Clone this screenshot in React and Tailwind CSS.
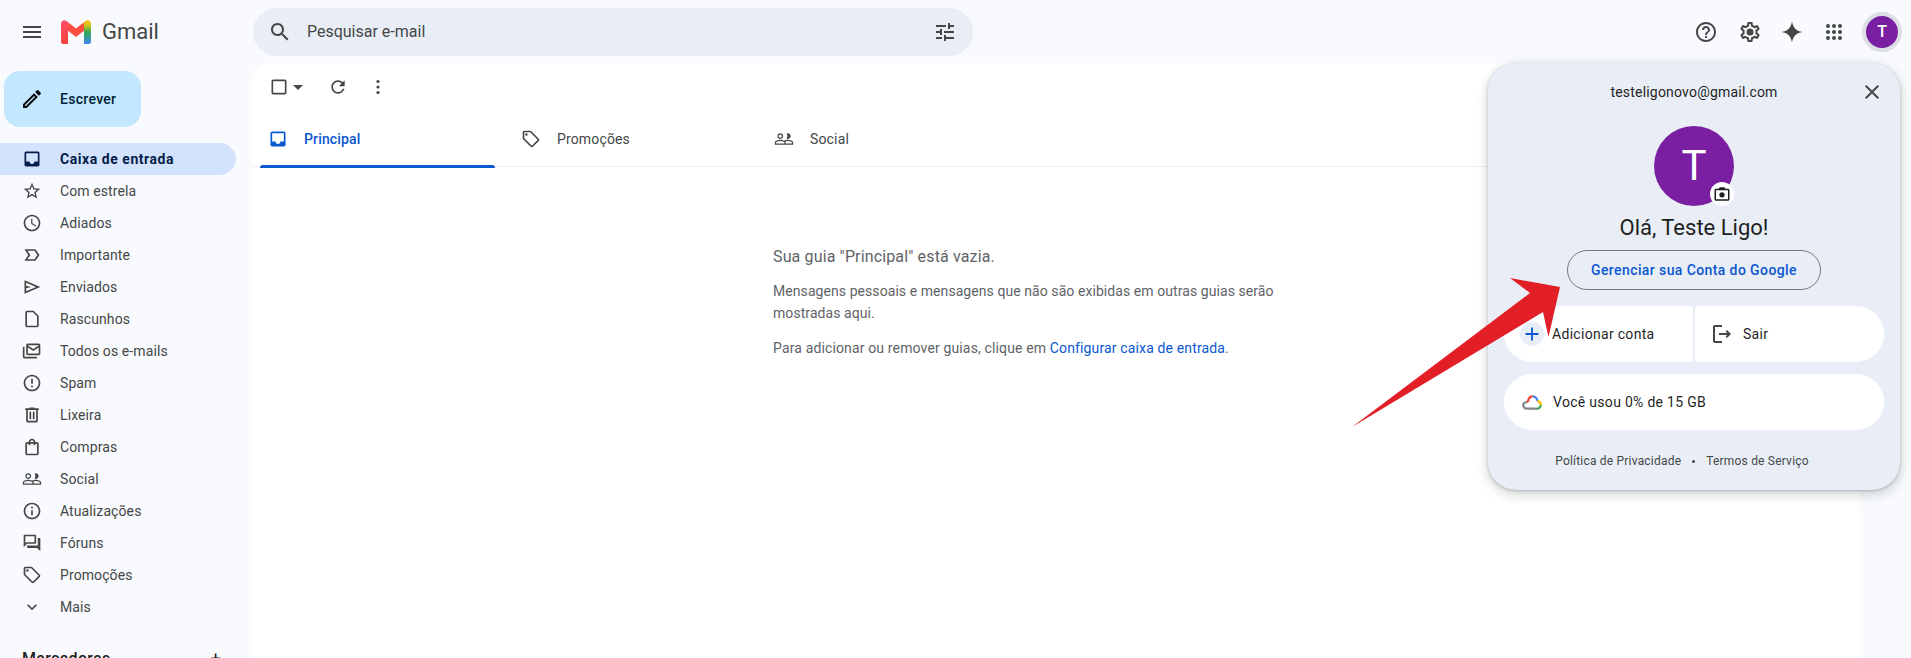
import React from 'react';

const ink = '#444746';

function Icon({ d, size = 20, color = ink, className = '', children }) {
  return (
    <svg viewBox="0 0 24 24" width={size} height={size} fill={color} className={`shrink-0 ${className}`}>
      {d && <path d={d} />}
      {children}
    </svg>
  );
}

const paths = {
  menu: 'M3 18h18v-2H3v2zm0-5h18v-2H3v2zm0-7v2h18V6H3z',
  search: 'M15.5 14h-.79l-.28-.27C15.41 12.59 16 11.11 16 9.5 16 5.91 13.09 3 9.5 3S3 5.91 3 9.5 5.91 16 9.5 16c1.61 0 3.09-.59 4.23-1.57l.27.28v.79l5 4.99L20.49 19l-4.99-5zm-6 0C7.01 14 5 11.99 5 9.5S7.01 5 9.5 5 14 7.01 14 9.5 11.99 14 9.5 14z',
  tune: 'M3 17v2h6v-2H3zM3 5v2h10V5H3zm10 16v-2h8v-2h-8v-2h-2v6h2zM7 9v2H3v2h4v2h2V9H7zm14 4v-2H11v2h10zm-6-4h2V7h4V5h-4V3h-2v6z',
  help: 'M11 18h2v-2h-2v2zm1-16C6.48 2 2 6.48 2 12s4.48 10 10 10 10-4.48 10-10S17.52 2 12 2zm0 18c-4.41 0-8-3.59-8-8s3.59-8 8-8 8 3.59 8 8-3.59 8-8 8zm0-14c-2.21 0-4 1.79-4 4h2c0-1.1.9-2 2-2s2 .9 2 2c0 2-3 1.75-3 5h2c0-2.25 3-2.5 3-5 0-2.21-1.79-4-4-4z',
  gear: 'M19.43 12.98c.04-.32.07-.64.07-.98 0-.34-.03-.66-.07-.98l2.11-1.65c.19-.15.24-.42.12-.64l-2-3.46c-.09-.16-.26-.25-.44-.25-.06 0-.12.01-.17.03l-2.49 1c-.52-.4-1.08-.73-1.69-.98l-.38-2.65C14.46 2.18 14.25 2 14 2h-4c-.25 0-.46.18-.49.42l-.38 2.65c-.61.25-1.17.59-1.69.98l-2.49-1c-.06-.02-.12-.03-.18-.03-.17 0-.34.09-.43.25l-2 3.46c-.13.22-.07.49.12.64l2.11 1.65c-.04.32-.07.65-.07.98 0 .33.03.66.07.98l-2.11 1.65c-.19.15-.24.42-.12.64l2 3.46c.09.16.26.25.44.25.06 0 .12-.01.17-.03l2.49-1c.52.4 1.08.73 1.69.98l.38 2.65c.03.24.24.42.49.42h4c.25 0 .46-.18.49-.42l.38-2.65c.61-.25 1.17-.59 1.69-.98l2.49 1c.06.02.12.03.18.03.17 0 .34-.09.43-.25l2-3.46c.12-.22.07-.49-.12-.64l-2.11-1.65zm-1.98-1.71c.04.31.05.52.05.73 0 .21-.02.43-.05.73l-.14 1.13.89.7 1.08.84-.7 1.21-1.27-.51-1.04-.42-.9.68c-.43.32-.84.56-1.25.73l-1.06.43-.16 1.13-.2 1.35h-1.4l-.19-1.35-.16-1.13-1.06-.43c-.43-.18-.83-.41-1.23-.71l-.91-.7-1.06.43-1.27.51-.7-1.21 1.08-.84.89-.7-.14-1.13c-.03-.31-.05-.54-.05-.74s.02-.43.05-.73l.14-1.13-.89-.7-1.08-.84.7-1.21 1.27.51 1.04.42.9-.68c.43-.32.84-.56 1.25-.73l1.06-.43.16-1.13.2-1.35h1.39l.19 1.35.16 1.13 1.06.43c.43.18.83.41 1.23.71l.91.7 1.06-.43 1.27-.51.7 1.21-1.07.85-.89.7.14 1.13zM12 8.5a3.5 3.5 0 1 0 0 7 3.5 3.5 0 1 0 0-7z',
  spark: 'M12 1.5C12.7 7.4 16.6 11.3 22.5 12 16.6 12.7 12.7 16.6 12 22.5 11.3 16.6 7.4 12.7 1.5 12 7.4 11.3 11.3 7.4 12 1.5z',
  inbox: 'M19 3H5c-1.1 0-2 .9-2 2v14c0 1.1.9 2 2 2h14c1.1 0 2-.9 2-2V5c0-1.1-.9-2-2-2zm0 12h-4c0 1.66-1.34 3-3 3s-3-1.34-3-3H5V5h14v10z',
  star: 'M22 9.24l-7.19-.62L12 2 9.19 8.63 2 9.24l5.46 4.73L5.82 21 12 17.27 18.18 21l-1.63-7.03L22 9.24zM12 15.4l-3.76 2.27 1-4.28-3.32-2.88 4.38-.38L12 6.1l1.71 4.04 4.38.38-3.32 2.88 1 4.28L12 15.4z',
  clock: 'M11.99 2C6.47 2 2 6.48 2 12s4.47 10 9.99 10C17.52 22 22 17.52 22 12S17.52 2 11.99 2zM12 20c-4.42 0-8-3.58-8-8s3.58-8 8-8 8 3.58 8 8-3.58 8-8 8zm.5-13H11v6l5.25 3.15.75-1.23-4.5-2.67z',
  important: 'M15 19H3l4.5-7L3 5h12c.65 0 1.26.31 1.63.84L21 12l-4.37 6.16c-.37.52-.98.84-1.63.84zm-8.5-2H15l3.5-5L15 7H6.5l3.5 5-3.5 5z',
  send: 'M3 20V4l19 8-19 8zm2-3l11.85-5L5 7v3.5l6 1.5-6 1.5V17z',
  draft: 'M14 2H6c-1.1 0-2 .9-2 2v16c0 1.1.9 2 2 2h12c1.1 0 2-.9 2-2V8l-6-6zM6 20V4h7.17L18 8.83V20H6z',
  allMail: 'M20 3H7c-1.1 0-2 .9-2 2v10c0 1.1.9 2 2 2h13c1.1 0 2-.9 2-2V5c0-1.1-.9-2-2-2zm0 2v.5l-6.5 4.2L7 5.5V5h13zM7 15V7.8l6.5 4.2L20 7.8V15H7zM3 7H1v12c0 1.1.9 2 2 2h15v-2H3V7z',
  spam: 'M11 15h2v2h-2zm0-8h2v6h-2zm.99-5C6.47 2 2 6.48 2 12s4.47 10 9.99 10C17.52 22 22 17.52 22 12S17.52 2 11.99 2zM12 20c-4.42 0-8-3.58-8-8s3.58-8 8-8 8 3.58 8 8-3.58 8-8 8z',
  trash: 'M15 4V3H9v1H4v2h1v13c0 1.1.9 2 2 2h10c1.1 0 2-.9 2-2V6h1V4h-5zm2 15H7V6h10v13zM9 8h2v9H9zm4 0h2v9h-2z',
  bag: 'M18 6h-2c0-2.21-1.79-4-4-4S8 3.79 8 6H6c-1.1 0-2 .9-2 2v12c0 1.1.9 2 2 2h12c1.1 0 2-.9 2-2V8c0-1.1-.9-2-2-2zm-6-2c1.1 0 2 .9 2 2h-4c0-1.1.9-2 2-2zm6 16H6V8h2v2h2V8h4v2h2V8h2v12z',
  people: 'M16.5 13c-1.2 0-3.07.34-4.5 1-1.43-.67-3.3-1-4.5-1C5.33 13 1 14.08 1 16.25V19h22v-2.75c0-2.17-4.33-3.25-6.5-3.25zm-4 4.5h-10v-1.25c0-.54 2.56-1.75 5-1.75s5 1.21 5 1.75v1.25zm9 0H14v-1.25c0-.46-.2-.86-.52-1.22.88-.3 1.96-.53 3.02-.53 2.44 0 5 1.21 5 1.75v1.25zM7.5 12c1.93 0 3.5-1.57 3.5-3.5S9.43 5 7.5 5 4 6.57 4 8.5 5.57 12 7.5 12zm0-5.5c1.1 0 2 .9 2 2s-.9 2-2 2-2-.9-2-2 .9-2 2-2zm9 5.5c1.93 0 3.5-1.57 3.5-3.5S18.43 5 16.5 5c-.5 0-1 .1-1.4.3.6.9.9 2 .9 3.2s-.3 2.3-.9 3.2c.4.2.9.3 1.4.3z',
  info: 'M11 7h2v2h-2zm0 4h2v6h-2zm1-9C6.48 2 2 6.48 2 12s4.48 10 10 10 10-4.48 10-10S17.52 2 12 2zm0 18c-4.41 0-8-3.59-8-8s3.59-8 8-8 8 3.59 8 8-3.59 8-8 8z',
  forum: 'M15 4v7H5.17L4 12.17V4h11m1-2H3c-.55 0-1 .45-1 1v14l4-4h10c.55 0 1-.45 1-1V3c0-.55-.45-1-1-1zm5 4h-2v9H6v2c0 .55.45 1 1 1h11l4 4V7c0-.55-.45-1-1-1z',
  tag: 'M21.41 11.58l-9-9C12.05 2.22 11.55 2 11 2H4c-1.1 0-2 .9-2 2v7c0 .55.22 1.05.59 1.42l9 9c.36.36.86.58 1.41.58s1.05-.22 1.41-.59l7-7c.37-.36.59-.86.59-1.41s-.23-1.06-.59-1.42zM13 20.01L4 11V4h7v-.01l9 9-7 7.02zM6.5 5a1.5 1.5 0 1 0 0 3 1.5 1.5 0 1 0 0-3z',
  chevron: 'M16.59 8.59L12 13.17 7.41 8.59 6 10l6 6 6-6z',
  pencil: 'M14.06 9.02l.92.92L5.92 19H5v-.92l9.06-9.06M17.66 3c-.25 0-.51.1-.7.29l-1.83 1.83 3.75 3.75 1.83-1.83c.39-.39.39-1.02 0-1.41l-2.34-2.34c-.2-.2-.45-.29-.71-.29zm-3.6 3.19L3 17.25V21h3.75L17.81 9.94l-3.75-3.75z',
  refresh: 'M17.65 6.35C16.2 4.9 14.21 4 12 4c-4.42 0-7.99 3.58-7.99 8s3.57 8 7.99 8c3.73 0 6.84-2.55 7.73-6h-2.08c-.82 2.33-3.04 4-5.65 4-3.31 0-6-2.69-6-6s2.69-6 6-6c1.66 0 3.14.69 4.22 1.78L13 11h7V4l-2.35 2.35z',
  checkbox: 'M19 5v14H5V5h14m0-2H5c-1.1 0-2 .9-2 2v14c0 1.1.9 2 2 2h14c1.1 0 2-.9 2-2V5c0-1.1-.9-2-2-2z',
  close: 'M19 6.41L17.59 5 12 10.59 6.41 5 5 6.41 10.59 12 5 17.59 6.41 19 12 13.41 17.59 19 19 17.59 13.41 12z',
  logout: 'M17 8l-1.41 1.41L17.17 11H9v2h8.17l-1.58 1.58L17 16l4-4-4-4zM5 5h7V3H5c-1.1 0-2 .9-2 2v14c0 1.1.9 2 2 2h7v-2H5V5z',
  add: 'M19 13h-6v6h-2v-6H5v-2h6V5h2v6h6v2z',
  camera: 'M20 5h-3.17L15 3H9L7.17 5H4c-1.1 0-2 .9-2 2v12c0 1.1.9 2 2 2h16c1.1 0 2-.9 2-2V7c0-1.1-.9-2-2-2zm0 14H4V7h16v12zM12 9.5a3.5 3.5 0 1 0 0 7 3.5 3.5 0 1 0 0-7z',
};

const navItems = [
  { label: 'Caixa de entrada', icon: 'inbox', active: true },
  { label: 'Com estrela', icon: 'star' },
  { label: 'Adiados', icon: 'clock' },
  { label: 'Importante', icon: 'important' },
  { label: 'Enviados', icon: 'send' },
  { label: 'Rascunhos', icon: 'draft' },
  { label: 'Todos os e-mails', icon: 'allMail' },
  { label: 'Spam', icon: 'spam' },
  { label: 'Lixeira', icon: 'trash' },
  { label: 'Compras', icon: 'bag' },
  { label: 'Social', icon: 'people' },
  { label: 'Atualizações', icon: 'info' },
  { label: 'Fóruns', icon: 'forum' },
  { label: 'Promoções', icon: 'tag' },
  { label: 'Mais', icon: 'chevron' },
];

function GmailLogo() {
  return (
    <svg viewBox="0 0 30 24" width="30" height="24" className="shrink-0">
      <defs>
        <linearGradient id="gm-right" x1="0" y1="0" x2="0" y2="1">
          <stop offset="0" stopColor="#fbbc04" />
          <stop offset="0.2" stopColor="#d9c41c" />
          <stop offset="0.5" stopColor="#34a853" />
          <stop offset="1" stopColor="#4285f4" />
        </linearGradient>
        <linearGradient id="gm-left" x1="0" y1="0" x2="0" y2="1">
          <stop offset="0" stopColor="#ff4f6a" />
          <stop offset="1" stopColor="#f4433b" />
        </linearGradient>
      </defs>
      <path fill="url(#gm-left)" d="M0 3.5C0 .8 3-.8 5.2.8L7 2.2V24H2.2C1 24 0 23 0 21.8z" />
      <path fill="url(#gm-right)" d="M30 3.5C30 .8 27-.8 24.8.8L23 2.2V24h4.8c1.2 0 2.2-1 2.2-2.2z" />
      <path fill="#ff4d42" d="M7 2.2l8 6.2 8-6.2v8.6l-8 6.2-8-6.2z" />
    </svg>
  );
}

function CloudIcon() {
  return (
    <svg viewBox="0 0 24 18" width="20" height="15" fill="none" strokeWidth="2.6" className="shrink-0">
      <path stroke="#ea4335" d="M5.6 8.8C6 8.2 6.6 7.6 7.3 7.2 8 4 10 1.7 13 1.7" />
      <path stroke="#4285f4" d="M13 1.7c1.6 0 3 .7 4 1.8 1 1.1 1.5 2.5 1.6 3.9" />
      <path stroke="#fbbc04" d="M18.6 7.4C20.8 7.8 22.5 9.5 22.5 12" />
      <path stroke="#34a853" d="M22.5 12c0 1.4-.6 2.7-1.6 3.5-.8.6-1.8.9-2.9.9" />
      <path stroke="#80868b" d="M18 16.4H6.2C3.3 16.4 1.4 14.4 1.4 12.1c0-2 1.7-3.6 4.2-3.3" />
    </svg>
  );
}

function Sidebar() {
  return (
    <aside className="w-[252px] shrink-0 pt-2">
      <button className="ml-1 flex h-14 w-[137px] items-center rounded-2xl bg-[#c2e7ff] pl-4 text-sm font-medium tracking-[0.3px] text-[#001d35]">
        <Icon d={paths.pencil} size={24} color="#0b0b0b" />
        <span className="ml-4">Escrever</span>
      </button>
      <nav className="mt-4 w-[236px]">
        {navItems.map((item) => (
          <div
            key={item.label}
            className={`flex h-8 items-center rounded-r-full pl-[22px] text-sm ${item.active ? 'bg-[#d3e3fd] font-bold tracking-[0.55px] text-[#041e49]' : 'tracking-[0.1px] text-[#444746]'}`}
          >
            <Icon d={paths[item.icon]} size={20} color={item.active ? '#041e49' : ink} />
            <span className="ml-[18px]">{item.label}</span>
          </div>
        ))}
      </nav>
      <div className="mt-[20px] flex h-8 items-center justify-between pl-[22px] pr-[31px] text-base font-medium tracking-[0.3px] text-[#1f1f1f]">
        <span>Marcadores</span>
        <span className="text-lg font-normal">+</span>
      </div>
    </aside>
  );
}

function Tab({ icon, label, active, className }) {
  return (
    <div
      className={`relative flex h-[56px] items-center text-sm tracking-[0.15px] ${active ? 'font-medium text-[#0b57d0]' : 'text-[#444746]'} ${className}`}
    >
      <Icon d={paths[icon]} size={20} color={active ? '#0b57d0' : ink} />
      <span className="ml-4">{label}</span>
      {active && <div className="absolute bottom-[-1px] left-0 h-[3px] w-[235px] rounded-t-[3px] bg-[#0b57d0]" />}
    </div>
  );
}

function EmptyInbox() {
  return (
    <div className="ml-[521px] w-[540px] pt-[78px] text-sm leading-[22px] text-[#5f6368]">
      <h2 className="text-base font-normal leading-6 tracking-[0.14px]">Sua guia "Principal" está vazia.</h2>
      <p className="mt-[11px] tracking-[0.07px]">Mensagens pessoais e mensagens que não são exibidas em outras guias serão mostradas aqui.</p>
      <p className="mt-[13px] tracking-[0.14px]">
        Para adicionar ou remover guias, clique em <span className="text-[#0b57d0]">Configurar caixa de entrada</span>.
      </p>
    </div>
  );
}

function AccountCard() {
  return (
    <div className="absolute left-[1488px] top-[63px] flex h-[427px] w-[412px] flex-col items-center rounded-[28px] bg-[#e9eef6] shadow-[0_4px_8px_3px_rgba(60,64,67,0.15),0_1px_3px_rgba(60,64,67,0.3)]">
      <div className="relative mt-[19px] flex h-5 w-full items-center justify-center text-sm tracking-[0.2px] text-[#1f1f1f]">
        testeligonovo@gmail.com
        <Icon d={paths.close} size={24} className="absolute right-4" />
      </div>
      <div className="relative mt-[24px] flex h-20 w-20 items-center justify-center rounded-full bg-[#7b1fa2] text-[42px] leading-none text-white">
        T
        <div className="absolute bottom-0 right-0 flex h-6 w-6 items-center justify-center rounded-full bg-white">
          <Icon d={paths.camera} size={18} color="#1f1f1f" />
        </div>
      </div>
      <div className="mt-[8px] text-[22px] leading-7 text-[#1f1f1f]">Olá, Teste Ligo!</div>
      <button className="mt-[8px] flex h-10 w-[254px] items-center justify-center rounded-full border border-[#747775] text-sm font-medium tracking-[0.4px] text-[#0b57d0]">
        Gerenciar sua Conta do Google
      </button>
      <div className="mt-4 flex h-14 w-[380px] gap-0.5 text-sm tracking-[0.3px] text-[#1f1f1f]">
        <div className="flex w-[189px] items-center rounded-l-[28px] rounded-r-[4px] bg-white pl-4">
          <div className="flex h-6 w-6 items-center justify-center rounded-full bg-[#e9eef6]">
            <Icon d={paths.add} size={22} color="#0b57d0" />
          </div>
          <span className="ml-2">Adicionar conta</span>
        </div>
        <div className="flex flex-1 items-center rounded-l-[4px] rounded-r-[28px] bg-white pl-[15px]">
          <Icon d={paths.logout} size={24} />
          <span className="ml-[9px]">Sair</span>
        </div>
      </div>
      <div className="mt-3 flex h-14 w-[380px] items-center rounded-[28px] bg-white pl-[18px] text-sm tracking-[0.3px] text-[#1f1f1f]">
        <CloudIcon />
        <span className="ml-[11px]">Você usou 0% de 15 GB</span>
      </div>
      <div className="mt-[23px] mr-6 flex items-center text-xs tracking-[0.2px] text-[#444746]">
        <span>Política de Privacidade</span>
        <span className="mx-[11px] h-[3px] w-[3px] rounded-full bg-[#444746]" />
        <span>Termos de Serviço</span>
      </div>
    </div>
  );
}

export default function App() {
  return (
    <div className="relative h-screen overflow-hidden bg-[#f8fafd] font-['Roboto',sans-serif]">
      <header className="flex h-[63px] items-center">
        <Icon d={paths.menu} size={24} className="ml-5" />
        <div className="ml-[17px]"><GmailLogo /></div>
        <span className="ml-[11px] text-[22px] leading-none text-[#444746]">Gmail</span>
        <div className="ml-[94px] flex h-12 w-[720px] items-center rounded-full bg-[#e9eef6] pl-[15px] text-base text-[#444746]">
          <Icon d={paths.search} size={24} />
          <span className="ml-[15px]">Pesquisar e-mail</span>
          <Icon d={paths.tune} size={24} className="ml-auto mr-4" />
        </div>
        <div className="ml-auto flex items-center pr-[9px]">
          <Icon d={paths.help} size={24} />
          <Icon d={paths.gear} size={24} className="ml-5" />
          <Icon d={paths.spark} size={24} className="ml-[18px]" />
          <svg viewBox="0 0 24 24" width="24" height="24" fill={ink} className="ml-[18px] shrink-0">
            {[4, 10, 16].map((y) => [4, 10, 16].map((x) => <circle key={`${x}-${y}`} cx={x + 2} cy={y + 2} r="2" />))}
          </svg>
          <div className="ml-4 flex h-10 w-10 items-center justify-center rounded-full border-4 border-[#dcdfe3] bg-[#7b1fa2] text-base font-medium text-white">
            T
          </div>
        </div>
      </header>
      <div className="flex h-[595px]">
        <Sidebar />
        <main className="mr-[51px] flex-1 rounded-tl-2xl bg-white">
          <div className="flex h-[48px] items-center pl-[17px]">
            <Icon d={paths.checkbox} size={20} />
            <svg viewBox="0 0 10 5" width="10" height="5" fill={ink} className="ml-1"><path d="M0 0h10L5 5z" /></svg>
            <Icon d={paths.refresh} size={20} className="ml-[25px]" />
            <svg viewBox="0 0 20 20" width="20" height="20" fill={ink} className="ml-[20px]">
              <circle cx="10" cy="4.5" r="1.6" /><circle cx="10" cy="10" r="1.6" /><circle cx="10" cy="15.5" r="1.6" />
            </svg>
          </div>
          <div className="flex h-[56px] border-b border-[#eceef1] pl-2">
            <Tab icon="inbox" label="Principal" active className="w-[261px] pl-2" />
            <Tab icon="tag" label="Promoções" className="w-[253px]" />
            <Tab icon="people" label="Social" className="w-[200px]" />
          </div>
          <EmptyInbox />
        </main>
      </div>
      <AccountCard />
      <svg viewBox="0 0 1911 658" width="1911" height="658" className="pointer-events-none absolute left-0 top-0">
        <polygon fill="#e21e26" points="1510,278 1560,287 1548.5,337 1543,312 1352,427 1530,293" />
      </svg>
    </div>
  );
}
